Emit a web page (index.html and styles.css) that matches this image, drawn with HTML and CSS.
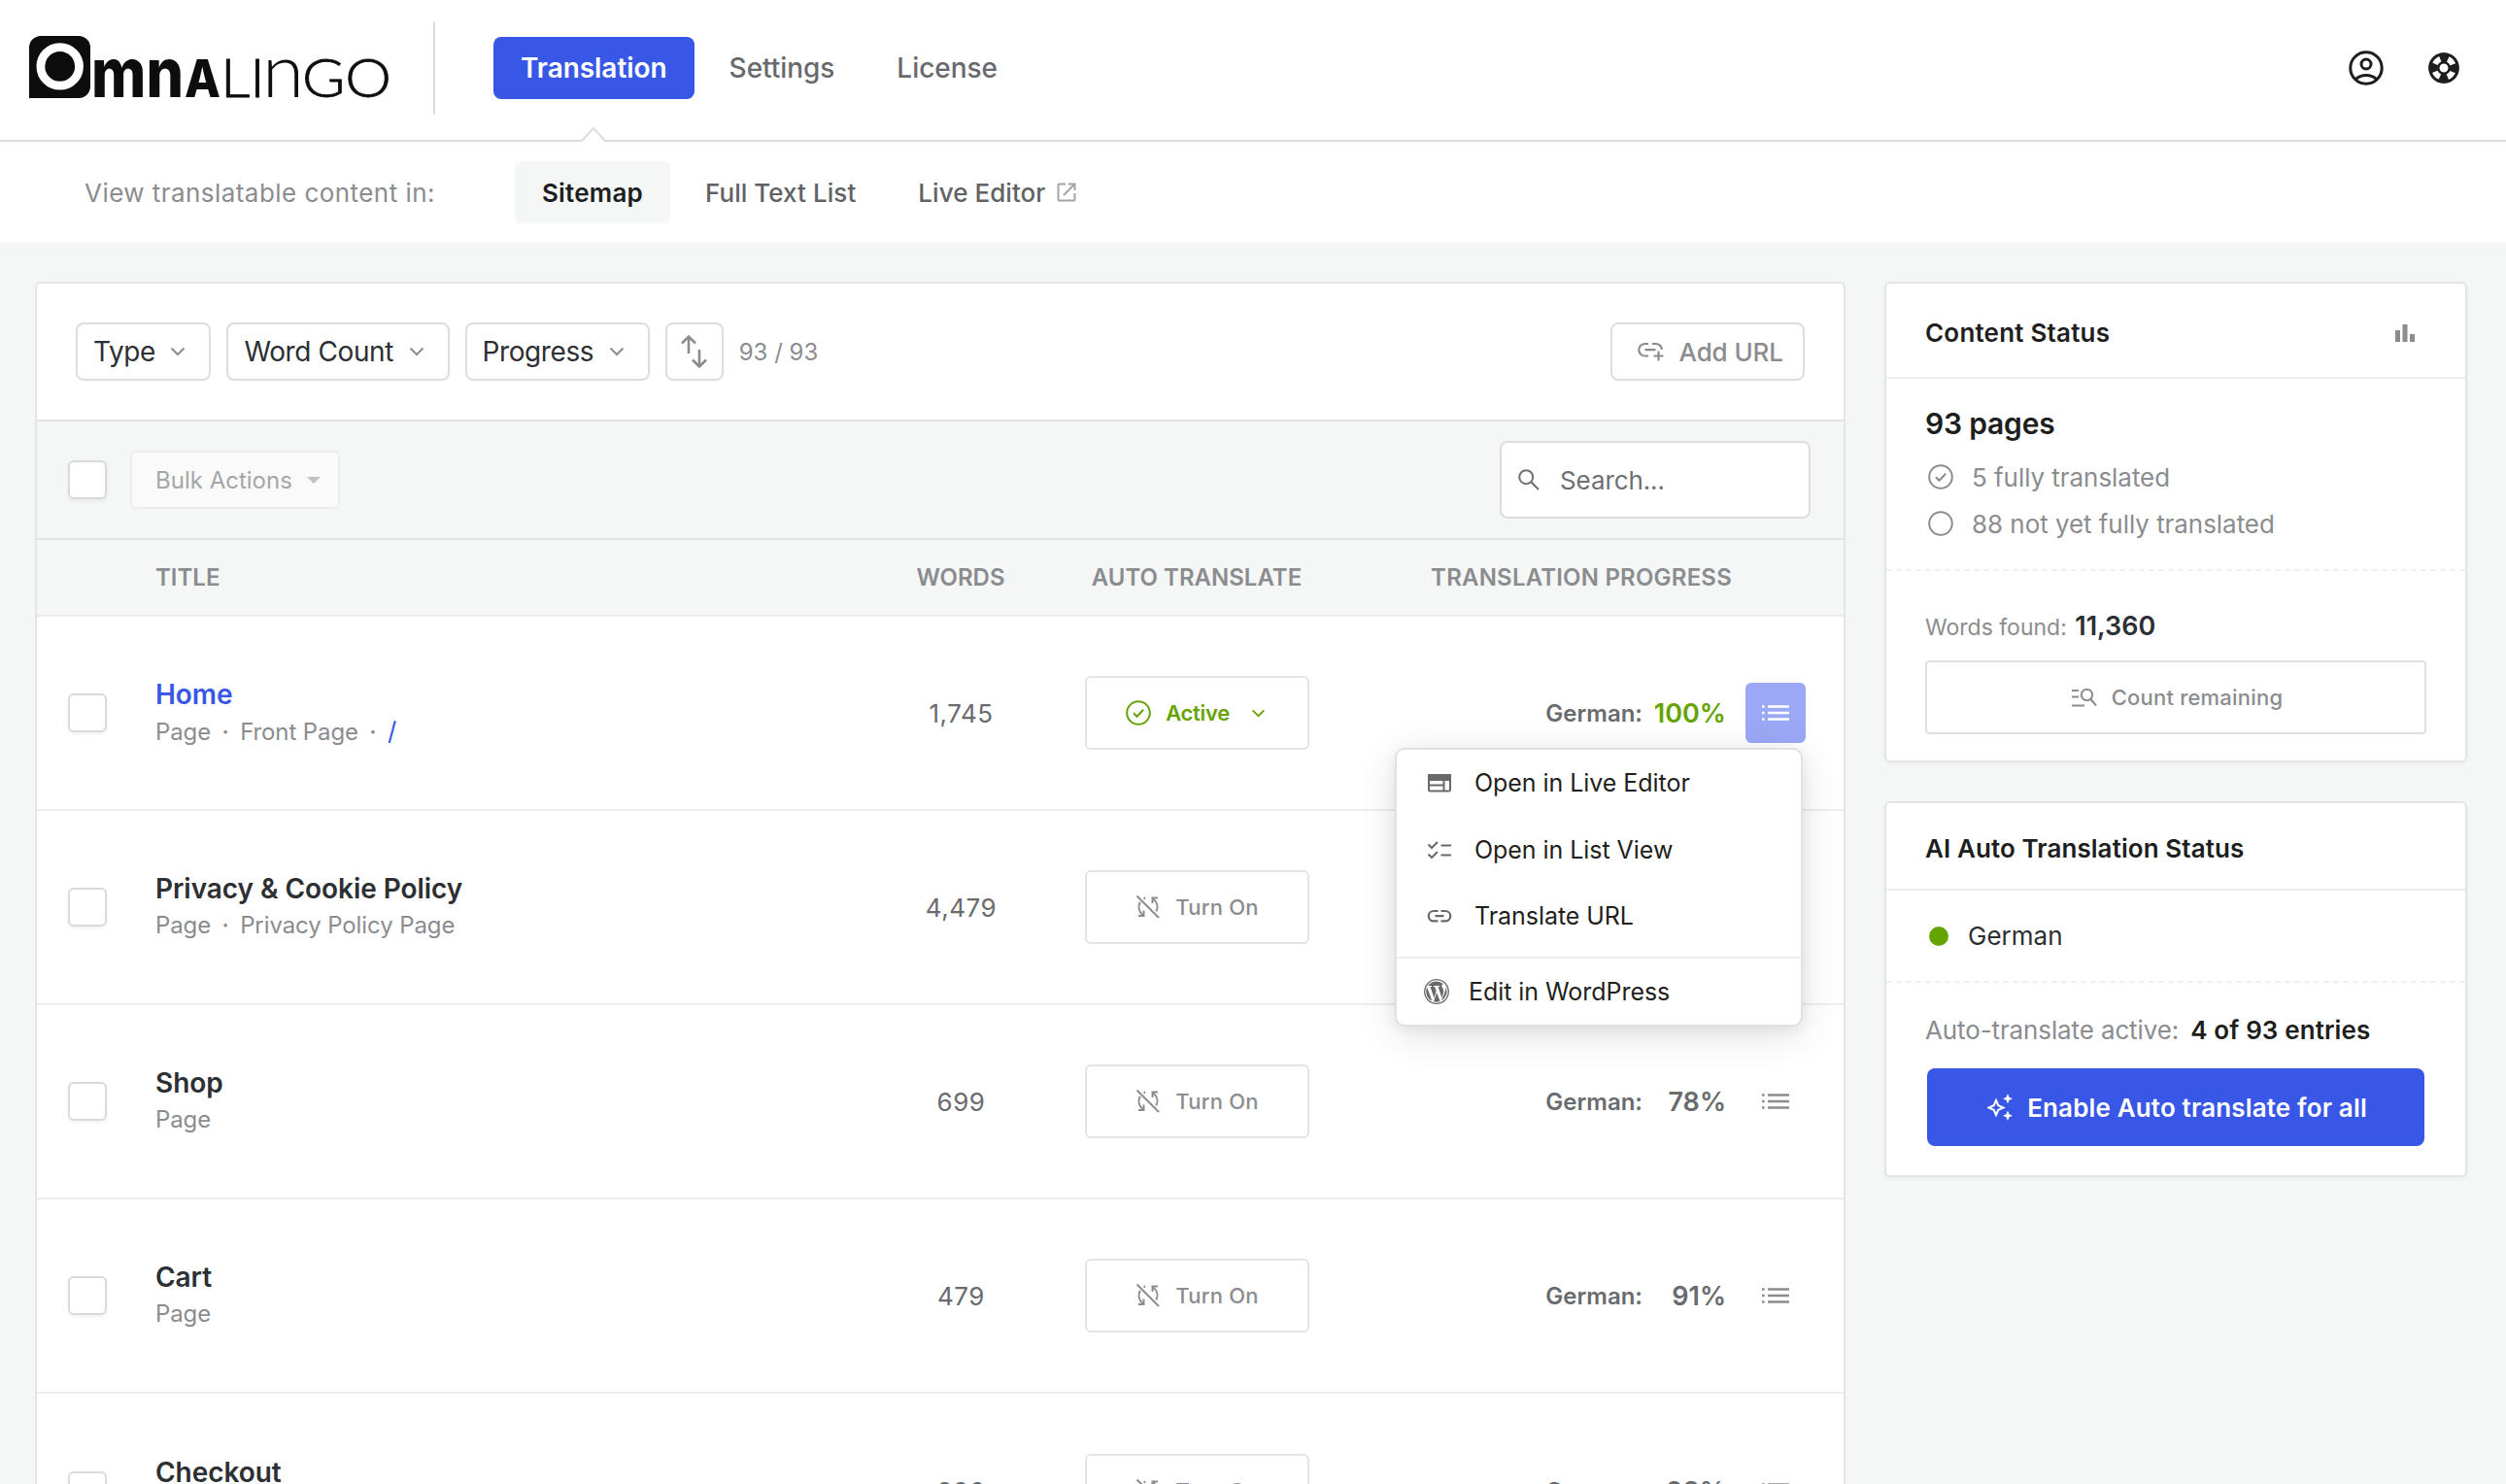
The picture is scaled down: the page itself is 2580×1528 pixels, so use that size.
FILE: index.html
```html
<!DOCTYPE html>
<html lang="en">
  <head>
    <meta charset="UTF-8" />
    <meta name="viewport" content="width=device-width, initial-scale=1.0" />
    <title>Omnalingo</title>
    <link rel="stylesheet" href="styles.css">
  </head>
  <body>
    <!-- shared icons -->
    <svg class="sprite" aria-hidden="true">
      <symbol id="chevron" viewBox="0 0 16 10">
        <path d="M1.5 1.5 8 8l6.500-6.500" fill="none" stroke="currentColor" stroke-width="2" />
      </symbol>
      <symbol id="check-circle" viewBox="0 0 26 26">
        <circle cx="13" cy="13" r="11.800" fill="none" stroke="currentColor" stroke-width="2" />
        <path d="M8 13.300l3.500 3.500 6.700-7" fill="none" stroke="currentColor" stroke-width="2" />
      </symbol>
      <symbol id="sync-off" viewBox="0 0 26 26">
        <g fill="none" stroke="currentColor" stroke-width="2">
          <path d="M1.500 1.500 24 24" />
          <path d="M23 3.500h-5.500V9" />
          <path d="M18 4.200c5 4 5.400 9.300 3.300 13.300" />
          <path d="M3 22h5.500v-5.500" />
          <path d="M8 21.500C3 17.500 2.700 12 4.800 7.800" />
          <path d="M8.500 4.300l1.600-.8" />
        </g>
      </symbol>
      <symbol id="list" viewBox="0 0 28 16">
        <path d="M6 1.500h22M6 8h22M6 14.500h22M0 1.500h2.600M0 8h2.600M0 14.500h2.600" fill="none" stroke="currentColor" stroke-width="2.400" />
      </symbol>
    </svg>

    <header class="header">
      <svg class="logo" viewBox="0 0 374 66">
        <path d="M0 64V12A12 12 0 0 1 12 0h39a12 12 0 0 1 12 12v40a12 12 0 0 1-12 12z" />
        <circle cx="31.700" cy="31.400" r="19.800" fill="none" stroke="#fff" stroke-width="8.800" />
        <text class="logo-bold low" x="64" y="63" textLength="95" lengthAdjust="spacingAndGlyphs">mn</text>
        <text class="logo-bold" x="160" y="63" textLength="37" lengthAdjust="spacingAndGlyphs">A</text>
        <text class="logo-thin" x="197" y="63" textLength="46" lengthAdjust="spacingAndGlyphs">LI</text>
        <text class="logo-thin low" x="240" y="63" textLength="43" lengthAdjust="spacingAndGlyphs">n</text>
        <text class="logo-thin" x="281" y="63" textLength="92" lengthAdjust="spacingAndGlyphs">GO</text>
      </svg>
      <nav class="nav">
        <a class="active">Translation</a>
        <a>Settings</a>
        <a>License</a>
      </nav>
      <div class="header-icons">
        <svg width="36" height="36" viewBox="0 0 36 36" fill="none" stroke="currentColor" stroke-width="3">
          <circle cx="18" cy="18" r="16.200" />
          <circle cx="18" cy="14" r="5" />
          <path d="M7.500 29.500C12.500 24 23.500 24 28.500 29.500" />
        </svg>
        <svg width="32" height="32" viewBox="0 0 32 32" fill="none">
          <circle cx="16" cy="16" r="10" stroke="currentColor" stroke-width="11" />
          <circle cx="16" cy="16" r="9.800" stroke="#fff" stroke-width="6.400" stroke-dasharray="7.400 7.990" stroke-dashoffset="-4" />
          <circle cx="16" cy="16" r="14.500" stroke="currentColor" stroke-width="2.600" />
          <circle cx="16" cy="16" r="6" stroke="currentColor" stroke-width="2" />
        </svg>
      </div>
      <svg class="notch" width="28" height="16" viewBox="0 0 28 16">
        <path d="M1 15 14 2l13 13v2H1z" fill="#fff" />
        <path d="M0 15h2L14 2l12 13h2" fill="none" stroke="#dcdcde" stroke-width="2" />
      </svg>
    </header>

    <div class="subnav">
      <span class="label">View translatable content in:</span>
      <a class="active">Sitemap</a>
      <a>Full Text List</a>
      <a>Live Editor
        <svg width="20" height="20" viewBox="0 0 20 20" fill="none" stroke="#a3a4a6" stroke-width="2">
          <path d="M9 1.500H2.500a1 1 0 0 0-1 1v15a1 1 0 0 0 1 1h15a1 1 0 0 0 1-1V11M12 1.500h6.500V8M18.500 1.500 7 13" />
        </svg>
      </a>
    </div>

    <main class="main">
      <section class="panel">
        <div class="filters">
          <button class="filter">Type <svg><use href="#chevron" /></svg></button>
          <button class="filter">Word Count <svg><use href="#chevron" /></svg></button>
          <button class="filter">Progress <svg><use href="#chevron" /></svg></button>
          <button class="filter sort">
            <svg viewBox="0 0 30 36" fill="none" stroke="currentColor" stroke-width="2.600">
              <path d="M9 20V2.500M2 9.500l7-7 7 7M20 16v17.500M13 26.500l7 7 7-7" />
            </svg>
          </button>
          <span class="count">93 / 93</span>
          <button class="filter add">
            <svg viewBox="0 0 28 20" fill="none" stroke="currentColor" stroke-width="2.200">
              <path d="M12 2H8.500a6.200 6.200 0 0 0 0 12.500H12M16 2h3.500a6.200 6.200 0 0 1 6.400 6M8.500 8.200h11M22.500 9.500v10M17.500 14.500h10" />
            </svg>
            Add URL
          </button>
        </div>

        <div class="bulk">
          <span class="checkbox"></span>
          <button class="bulk-btn">Bulk Actions <i></i></button>
          <div class="search">
            <svg width="22" height="22" viewBox="0 0 22 22" fill="none" stroke="currentColor" stroke-width="2">
              <circle cx="8.200" cy="8.200" r="7" />
              <path d="M13.200 13.200 21 21" />
            </svg>
            Search...
          </div>
        </div>

        <div class="row head">
          <span></span>
          <span>TITLE</span>
          <span class="center">WORDS</span>
          <span class="center">AUTO TRANSLATE</span>
          <span class="right">TRANSLATION PROGRESS</span>
        </div>

        <div class="row">
          <span class="checkbox"></span>
          <div class="title">
            <h3 class="blue">Home</h3>
            <p>Page<b>·</b>Front Page<b>·</b><a class="blue">/</a></p>
          </div>
          <span class="words">1,745</span>
          <button class="auto on"><svg><use href="#check-circle" /></svg>Active<svg class="chev"><use href="#chevron" /></svg></button>
          <div class="progress">
            <span>German:</span>
            <strong class="done">100%</strong>
            <button class="menu-btn open"><svg><use href="#list" /></svg></button>
            <div class="menu">
              <a>
                <svg viewBox="0 0 26 26" fill="none" stroke="currentColor" stroke-width="2">
                  <rect x="2" y="5" width="22" height="16.500" rx="1.500" />
                  <path d="M2 5h22v5H2z" fill="currentColor" />
                  <path d="M2 15.500h15M17.500 10v11" />
                </svg>
                Open in Live Editor
              </a>
              <a>
                <svg viewBox="0 0 26 26" fill="none" stroke="currentColor" stroke-width="2">
                  <path d="M14.500 8.500H25M14.500 18.500H25M1.500 7.500 5 11l6-6M1.500 17.500 5 21l6-6" />
                </svg>
                Open in List View
              </a>
              <a>
                <svg viewBox="0 0 26 26" fill="none" stroke="currentColor" stroke-width="2.200">
                  <path d="M11.500 8H7a5.200 5.200 0 0 0 0 10.400h4.500M14.500 8H19a5.200 5.200 0 0 1 0 10.400h-4.500M8.500 13.200h9" />
                </svg>
                Translate URL
              </a>
              <a class="wp">
                <svg viewBox="0 0 26 26">
                  <circle cx="13" cy="13" r="12.300" fill="none" stroke="currentColor" stroke-width="1.300" />
                  <path fill="currentColor" d="M2.300 13c0 4.200 2.500 7.900 6 9.600L3.200 8.600A10.600 10.600 0 0 0 2.300 13zM20.200 12.500c0-1.300-.5-2.200-.9-2.900-.5-.9-1-1.600-1-2.500 0-1 .7-1.900 1.800-1.900A10.700 10.700 0 0 0 4.100 7.100h.7c1.100 0 2.900-.1 2.900-.1.600 0 .6.800.1.900l-1.300.1 3.900 11.500 2.300-7L11.100 8l-1.200-.1c-.6 0-.5-.9.100-.9l2.800.1 2.900-.1c.6 0 .6.800.1.900l-1.200.1 3.800 11.400 1.100-3.500c.5-1.400.7-2.500.7-3.400zM13.200 13.900 10 23.200a10.700 10.700 0 0 0 6.600-.2zM22.400 7.900c.3 3-.7 5-1.400 7l-3.200 7.300a10.700 10.700 0 0 0 4.600-14.300z" />
                </svg>
                Edit in WordPress
              </a>
            </div>
          </div>
        </div>

        <div class="row">
          <span class="checkbox"></span>
          <div class="title">
            <h3>Privacy &amp; Cookie Policy</h3>
            <p>Page<b>·</b>Privacy Policy Page</p>
          </div>
          <span class="words">4,479</span>
          <button class="auto"><svg><use href="#sync-off" /></svg>Turn On</button>
        </div>

        <div class="row">
          <span class="checkbox"></span>
          <div class="title">
            <h3>Shop</h3>
            <p>Page</p>
          </div>
          <span class="words">699</span>
          <button class="auto"><svg><use href="#sync-off" /></svg>Turn On</button>
          <div class="progress">
            <span>German:</span>
            <strong>78%</strong>
            <button class="menu-btn"><svg><use href="#list" /></svg></button>
          </div>
        </div>

        <div class="row">
          <span class="checkbox"></span>
          <div class="title">
            <h3>Cart</h3>
            <p>Page</p>
          </div>
          <span class="words">479</span>
          <button class="auto"><svg><use href="#sync-off" /></svg>Turn On</button>
          <div class="progress">
            <span>German:</span>
            <strong>91%</strong>
            <button class="menu-btn"><svg><use href="#list" /></svg></button>
          </div>
        </div>

        <div class="row">
          <span class="checkbox"></span>
          <div class="title">
            <h3>Checkout</h3>
            <p>Page</p>
          </div>
          <span class="words">896</span>
          <button class="auto"><svg><use href="#sync-off" /></svg>Turn On</button>
          <div class="progress">
            <span>German:</span>
            <strong>98%</strong>
            <button class="menu-btn"><svg><use href="#list" /></svg></button>
          </div>
        </div>
      </section>

      <aside class="sidebar">
        <section class="card">
          <h2>Content Status
            <svg width="20" height="18" viewBox="0 0 20 18" fill="#8b8c8f">
              <path d="M0 6h5v12H0zM7.500 0h5v18h-5zM15 10h5v8h-5z" />
            </svg>
          </h2>
          <div class="pages">
            <h1>93 pages</h1>
            <p><svg><use href="#check-circle" /></svg>5 fully translated</p>
            <p><svg viewBox="0 0 26 26"><circle cx="13" cy="13" r="11.800" fill="none" stroke="currentColor" stroke-width="2" /></svg>88 not yet fully translated</p>
          </div>
          <div class="found">
            <p>Words found: <strong>11,360</strong></p>
            <button class="count-btn">
              <svg width="26" height="20" viewBox="0 0 26 20" fill="none" stroke="currentColor" stroke-width="2">
                <path d="M0 3h7M0 9.500h7M0 18.500h13M19.500 12 25 18.500" />
                <circle cx="15.500" cy="7.500" r="5.700" />
              </svg>
              Count remaining
            </button>
          </div>
        </section>

        <section class="card">
          <h2 class="short">AI Auto Translation Status</h2>
          <div class="lang"><i></i>German</div>
          <div class="auto-status">
            <p>Auto-translate active: <strong>4 of 93 entries</strong></p>
            <button class="enable-btn">
              <svg width="26" height="28" viewBox="0 0 26 28" fill="#fff">
                <path d="M9 7 11.300 12.200 16.500 14.500 11.300 16.800 9 22 6.700 16.800 1.500 14.500 6.700 12.200z" fill="none" stroke="#fff" stroke-width="2" />
                <path d="M21 0l1.500 3.800L26 5.300l-3.500 1.500L21 10.500l-1.500-3.700L16 5.300l3.500-1.500zM21 17.500l1.500 3.700 3.500 1.500-3.500 1.500L21 28l-1.500-3.800-3.500-1.500 3.500-1.500z" />
              </svg>
              Enable Auto translate for all
            </button>
          </div>
        </section>
      </aside>
    </main>
  </body>
</html>
```
FILE: styles.css
```css
* {
  box-sizing: border-box;
  margin: 0;
  padding: 0;
}
body {
  height: 1528px;
  overflow: hidden;
  background: #f5f7f7;
  font-family: Inter, "Liberation Sans", sans-serif;
  font-size: 26px;
  color: #1d1e20;
}
button {
  display: flex;
  align-items: center;
  background: #fff;
  border: 2px solid #dcdddf;
  border-radius: 6px;
  font: inherit;
  white-space: nowrap;
}
svg {
  flex-shrink: 0;
}
.sprite {
  position: absolute;
  width: 0;
  height: 0;
}

/* header */
.header {
  position: relative;
  display: flex;
  height: 146px;
  padding: 22px 48px 0 30px;
  background: #fff;
  border-bottom: 2px solid #dcdcde;
}
.logo {
  width: 374px;
  height: 66px;
  margin-top: 15px;
  overflow: visible;
  fill: #0d0d0e;
}
.logo-bold {
  font: 800 54px Inter, sans-serif;
}
.logo-thin {
  font: 300 56px Lato, sans-serif;
  stroke: #0d0d0e;
  stroke-width: 0.8px;
}
.logo-bold.low {
  font-size: 70px;
}
.logo-thin.low {
  font-size: 76px;
  stroke-width: 0;
}
.nav {
  display: flex;
  height: 96px;
  margin-left: 42px;
  padding: 16px 0 0 60px;
  border-left: 2px solid #dcdcde;
}
.nav a {
  height: 64px;
  margin-right: 8px;
  padding: 0 28px;
  border-radius: 8px;
  font-size: 28px;
  font-weight: 500;
  line-height: 64px;
  letter-spacing: -0.05px;
  color: #67696c;
}
.nav .active {
  background: #3857e7;
  font-weight: 600;
  color: #fff;
}
.header-icons {
  display: flex;
  align-items: center;
  gap: 46px;
  height: 96px;
  margin-left: auto;
}
.notch {
  position: absolute;
  left: 597px;
  bottom: -2px;
}
.subnav {
  display: flex;
  align-items: center;
  height: 104px;
  padding-left: 87px;
  background: #fff;
  font-weight: 500;
  letter-spacing: 0.05px;
  color: #606265;
}
.subnav .label {
  width: 443px;
  font-weight: 400;
  letter-spacing: 0.45px;
  color: #8b8c8f;
}
.subnav a {
  display: flex;
  align-items: center;
  gap: 12px;
  height: 64px;
  margin-right: 8px;
  padding: 0 28px;
  border-radius: 6px;
}
.subnav .active {
  background: #f5f7f7;
  font-weight: 600;
  letter-spacing: 0.2px;
  color: #1d1e20;
}

.main {
  display: flex;
  align-items: flex-start;
  gap: 40px;
  height: 1278px;
  padding: 40px 36px 0;
  overflow: hidden;
}
.panel {
  width: 1864px;
  background: #fff;
  border: 2px solid #e3e4e5;
  border-radius: 6px;
}
.filters {
  display: flex;
  align-items: center;
  gap: 16px;
  height: 142px;
  padding: 0 40px;
  border-bottom: 2px solid #e3e4e5;
}
.filter {
  gap: 15.5px;
  height: 60px;
  padding: 0 24px 0 16px;
  border-radius: 8px;
  font-size: 28px;
  letter-spacing: -0.4px;
  color: #2c2f33;
}
.filter svg {
  width: 16px;
  height: 10px;
  color: #8b8c8f;
}
.filter.sort {
  width: 60px;
  padding: 0 13px;
}
.filter.sort svg {
  width: 30px;
  height: 36px;
}
.count {
  font-size: 24px;
  color: #8b8c8f;
}
.filter.add {
  margin-left: auto;
  width: 200px;
  padding: 0 0 0 25px;
  font-size: 26px;
  font-weight: 500;
  letter-spacing: -0.1px;
  color: #8b8c8f;
}
.filter.add svg {
  width: 28px;
  height: 20px;
}
.bulk {
  display: flex;
  align-items: center;
  height: 122px;
  padding: 0 34px 0 32px;
  background: #f5f7f7;
  border-bottom: 2px solid #e3e4e5;
}
.checkbox {
  width: 40px;
  height: 40px;
  background: #fff;
  border: 2px solid #d9dadc;
  border-radius: 6px;
  box-shadow: 0 2px 4px rgba(0, 0, 0, 0.06);
}
.bulk-btn {
  gap: 15px;
  height: 60px;
  margin-left: 24px;
  padding: 0 18px 0 24px;
  background: #fafafa;
  border-color: #ebecec;
  font-size: 24px;
  color: #a5a6a8;
}
.bulk-btn i {
  border: 7px solid transparent;
  border-top-color: #c0c1c3;
  border-bottom: 0;
}
.search {
  display: flex;
  align-items: center;
  gap: 21px;
  width: 320px;
  height: 80px;
  margin-left: auto;
  padding-left: 17px;
  background: #fff;
  border: 2px solid #dbdddd;
  border-radius: 8px;
  letter-spacing: -0.1px;
  color: #6e6f72;
}

/* table */
.row {
  display: grid;
  grid-template-columns: 90px 717px 224px 262px 1fr;
  align-items: center;
  height: 200px;
  padding: 0 39px 0 32px;
  border-bottom: 2px solid #ededee;
}
.row.head {
  height: 79px;
  background: #f5f7f7;
  font-size: 24px;
  font-weight: 600;
  color: #8b8c8f;
}
.row:last-child {
  border-bottom: 0;
}
.center {
  text-align: center;
}
.right {
  padding-right: 76px;
  letter-spacing: 0.2px;
  text-align: right;
}
.title {
  padding-bottom: 1px;
}
.row h3 {
  font-size: 28px;
  font-weight: 600;
  line-height: 38px;
  letter-spacing: -0.05px;
  color: #2c2f33;
}
.row p {
  font-size: 24px;
  line-height: 37px;
  letter-spacing: -0.1px;
  color: #8b8c8f;
}
.row p b {
  display: inline-block;
  width: 30px;
  text-align: center;
  font-weight: 500;
}
.row .blue {
  color: #3857e7;
}
.row p .blue {
  font-size: 26px;
}
.words {
  padding-left: 1px;
  text-align: center;
  letter-spacing: 0.5px;
  color: #696b6e;
}
.auto {
  justify-content: center;
  justify-self: center;
  gap: 15px;
  width: 231px;
  height: 76px;
  margin-left: 1px;
  border-color: #e3e4e5;
  font-size: 22px;
  font-weight: 500;
  letter-spacing: 0.2px;
  color: #8b8c8f;
}
.auto svg {
  width: 26px;
  height: 26px;
}
.auto .chev {
  width: 15px;
  height: 9px;
  margin-left: 7px;
}
.auto.on {
  padding-right: 3px;
  font-weight: 600;
  letter-spacing: -0.3px;
  color: #64a300;
}
.progress {
  position: relative;
  display: flex;
  align-items: center;
  justify-content: flex-end;
  font-size: 24px;
  font-weight: 600;
  color: #696b6e;
}
.progress strong {
  width: 87px;
  margin-right: 20px;
  padding-right: 0;
  font-size: 27px;
  font-weight: 600;
  text-align: right;
}
.progress span {
  margin-right: -1px;
}
.progress .done {
  color: #64a300;
}
.menu-btn {
  justify-content: center;
  width: 62px;
  height: 62px;
  border: 0;
  border-radius: 6px;
  color: #8b8c8f;
}
.menu-btn svg {
  width: 28px;
  height: 16px;
}
.menu-btn.open {
  background: #9ba8f5;
  color: #fff;
}
.menu {
  position: absolute;
  z-index: 2;
  top: 67px;
  right: 3px;
  width: 420px;
  height: 287px;
  background: #fff;
  border: 2px solid #e0e1e2;
  border-radius: 10px;
  box-shadow: 0 8px 40px rgba(0, 0, 0, 0.12), 0 4px 14px rgba(0, 0, 0, 0.06);
}
.menu a {
  display: flex;
  align-items: center;
  gap: 23px;
  height: 68.5px;
  padding-left: 31px;
  font-size: 25px;
  font-weight: 400;
  letter-spacing: -0.05px;
  color: #1f1f20;
}
.menu svg {
  width: 26px;
  height: 26px;
  color: #68696b;
}
.menu .wp {
  gap: 20px;
  height: 71px;
  margin-top: 7px;
  padding-left: 28px;
  border-top: 2px solid #ededee;
}

/* sidebar */
.sidebar {
  width: 600px;
}
.card {
  margin-bottom: 40px;
  background: #fff;
  border: 2px solid #e3e4e5;
  border-radius: 6px;
  box-shadow: 0 2px 4px rgba(0, 0, 0, 0.04);
}
.card h2 {
  display: flex;
  align-items: center;
  justify-content: space-between;
  height: 98px;
  padding: 5px 52px 0 40px;
  border-bottom: 2px solid #ededee;
  font-size: 26px;
  font-weight: 600;
  letter-spacing: 0.2px;
}
.card h2.short {
  height: 90px;
  letter-spacing: 0.08px;
}
.pages {
  height: 198px;
  padding: 23px 40px 0;
  border-bottom: 2px dashed #f0f0f1;
  color: #8b8c8f;
}
.pages h1 {
  margin-bottom: 4px;
  font-size: 30px;
  font-weight: 600;
  line-height: 46px;
  letter-spacing: -0.2px;
  color: #1d1e20;
}
.pages p {
  display: flex;
  align-items: center;
  gap: 19px;
  height: 48px;
  padding: 8px 0 0 3px;
  letter-spacing: -0.05px;
}
.pages svg {
  width: 26px;
  height: 26px;
}
.found {
  height: 195px;
  padding: 38px 40px 0;
  color: #8b8c8f;
}
.found p {
  font-size: 23px;
  line-height: 37px;
}
.found strong {
  margin-left: 2px;
  font-size: 27px;
  font-weight: 600;
  color: #2c2f33;
}
.count-btn {
  justify-content: center;
  gap: 15px;
  width: 516px;
  height: 76px;
  margin-top: 15px;
  padding-left: 3px;
  border-color: #dfe0e1;
  border-radius: 4px;
  font-size: 22px;
  font-weight: 500;
  letter-spacing: 0.2px;
  color: #8b8c8f;
}
.lang {
  display: flex;
  align-items: center;
  gap: 20px;
  height: 95px;
  padding-left: 44px;
  border-bottom: 2px dashed #f0f0f1;
  color: #2c2f33;
}
.lang i {
  width: 20px;
  height: 20px;
  border-radius: 50%;
  background: #64a300;
}
.auto-status {
  height: 198px;
  padding: 27px 40px 0;
  color: #8b8c8f;
}
.auto-status p {
  line-height: 44px;
  letter-spacing: -0.12px;
}
.auto-status strong {
  margin-left: 5px;
  font-weight: 600;
  letter-spacing: 0.1px;
  color: #1d1e20;
}
.enable-btn {
  justify-content: center;
  gap: 15px;
  width: 512px;
  height: 80px;
  margin: 17px 0 0 2px;
  padding-left: 3px;
  background: #3857e7;
  border: 0;
  border-radius: 8px;
  font-weight: 600;
  letter-spacing: 0.15px;
  color: #fff;
}
```
